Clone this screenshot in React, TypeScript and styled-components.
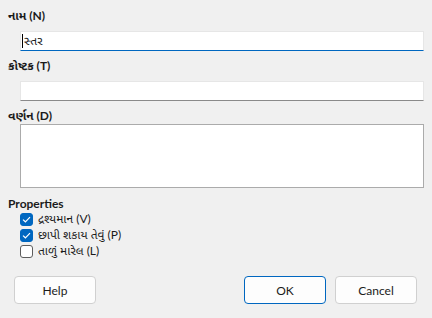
import React from "react";
import styled, { createGlobalStyle } from "styled-components";

const Global = createGlobalStyle`
  html, body { margin: 0; padding: 0; background: #f0f0f0; }
  body { font-family: "Segoe UI", Lato, "Noto Sans Gujarati", "Noto Sans", sans-serif; font-size: 12px; color: #1b1b1b; }
`;

const Dialog = styled.div`
  width: 432px;
  height: 318px;
  box-sizing: border-box;
  padding: 8px 15px 0 8px;
  display: flex;
  flex-direction: column;
`;

const Field = styled.div<{ $top: number }>`
  display: flex;
  flex-direction: column;
  margin-top: ${(p) => p.$top}px;
`;

const Label = styled.div<{ $gap: number }>`
  font-weight: 700;
  height: 16px;
  line-height: 16px;
  margin-bottom: ${(p) => p.$gap}px;
  white-space: nowrap;
`;

const Input = styled.div<{ $focused?: boolean }>`
  margin-left: 12px;
  width: 404px;
  height: 20px;
  box-sizing: border-box;
  background: #ffffff;
  border: 1px solid #e6e6e6;
  border-bottom: 1px solid ${(p) => (p.$focused ? "#0067c0" : "#8a8a8a")};
  display: flex;
  align-items: center;
  padding-left: 1px;
`;

const Caret = styled.span`
  display: inline-block;
  width: 1px;
  height: 14px;
  background: #000;
  margin-right: 1px;
`;

const InputText = styled.span`
  line-height: 16px;
`;

const TextArea = styled.div`
  margin-left: 12px;
  width: 404px;
  height: 64px;
  box-sizing: border-box;
  background: #ffffff;
  border: 1px solid #ababab;
`;

const Section = styled.div`
  font-weight: 700;
  height: 15px;
  line-height: 15px;
  margin-top: 8px;
`;

const CheckList = styled.div`
  display: flex;
  flex-direction: column;
  padding-left: 12px;
`;

const CheckRow = styled.div`
  height: 16px;
  display: flex;
  align-items: center;
  gap: 5px;
  white-space: nowrap;
`;

const Box = styled.span<{ $checked?: boolean }>`
  width: 13px;
  height: 13px;
  box-sizing: border-box;
  border-radius: 3px;
  background: ${(p) => (p.$checked ? "#0067c0" : "#ffffff")};
  border: 1px solid ${(p) => (p.$checked ? "#0067c0" : "#5d5d5d")};
  display: flex;
  align-items: center;
  justify-content: center;
  flex-shrink: 0;
`;

const ButtonRow = styled.div`
  display: flex;
  margin-top: 17px;
  padding-left: 6px;
`;

const Button = styled.div<{ $default?: boolean }>`
  width: 82px;
  height: 28px;
  box-sizing: border-box;
  border-radius: 4px;
  background: #fdfdfd;
  border: 1px solid ${(p) => (p.$default ? "#0067c0" : "#d0d0d0")};
  display: flex;
  align-items: center;
  justify-content: center;
  font-size: 12px;
`;

const Spacer = styled.div`
  flex: 1;
`;

const ButtonGap = styled.div`
  width: 9px;
`;

const Check = () => (
  <svg width="9" height="7" viewBox="0 0 9 7">
    <path d="M1 3.6 L3.4 5.8 L8 1.2" fill="none" stroke="#fff" strokeWidth="1.2" />
  </svg>
);

export default function App() {
  return (
    <>
      <Global />
      <Dialog>
        <Field $top={0}>
          <Label $gap={7}>નામ (N)</Label>
          <Input $focused>
            <Caret />
            <InputText>સ્તર</InputText>
          </Input>
        </Field>
        <Field $top={7}>
          <Label $gap={7}>કોષ્ટક (T)</Label>
          <Input />
        </Field>
        <Field $top={7}>
          <Label $gap={0}>વર્ણન (D)</Label>
          <TextArea />
        </Field>
        <Section>Properties</Section>
        <CheckList>
          <CheckRow>
            <Box $checked>
              <Check />
            </Box>
            દ્રશ્યમાન (V)
          </CheckRow>
          <CheckRow>
            <Box $checked>
              <Check />
            </Box>
            છાપી શકાય તેવું (P)
          </CheckRow>
          <CheckRow>
            <Box />
            તાળું મારેલ (L)
          </CheckRow>
        </CheckList>
        <ButtonRow>
          <Button>Help</Button>
          <Spacer />
          <Button $default>OK</Button>
          <ButtonGap />
          <Button>Cancel</Button>
        </ButtonRow>
      </Dialog>
    </>
  );
}
